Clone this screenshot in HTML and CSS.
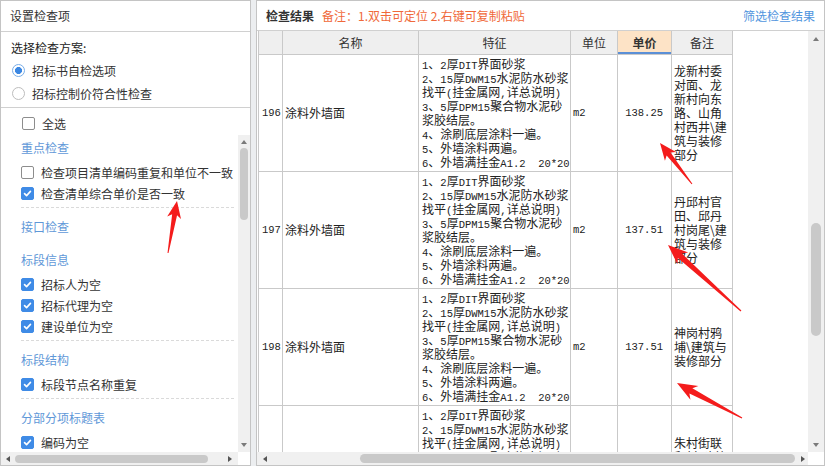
FILE: index.html
```html
<!DOCTYPE html>
<html lang="zh-CN">
<head>
<meta charset="utf-8">
<title>设置检查项</title>
<link rel="stylesheet" href="styles.css">
</head>
<body>
<div class="app">
  <aside class="left">
    <div class="ptitle">设置检查项</div>
    <div class="scheme">
      <div class="scheme-title">选择检查方案:</div>
      <div class="radio on"><span class="rb"></span>招标书自检选项</div>
      <div class="radio"><span class="rb"></span>招标控制价符合性检查</div>
    </div>
    <div class="selall"><span class="cb"></span>全选</div>
    <div class="lscroll">
      <div class="lview">
        <div class="list">
          <div class="glabel">重点检查</div>
          <div class="items">
            <div class="item"><span class="cb"></span>检查项目清单编码重复和单位不一致</div>
            <div class="item"><span class="cb on"><svg viewBox="0 0 13 13"><path d="M3 6.6l2.4 2.4 4.6-5"/></svg></span>检查清单综合单价是否一致</div>
          </div>
          <div class="sep"></div>
          <div class="glabel">接口检查</div>
          <div class="empty"></div>
          <div class="glabel">标段信息</div>
          <div class="items">
            <div class="item"><span class="cb on"><svg viewBox="0 0 13 13"><path d="M3 6.6l2.4 2.4 4.6-5"/></svg></span>招标人为空</div>
            <div class="item"><span class="cb on"><svg viewBox="0 0 13 13"><path d="M3 6.6l2.4 2.4 4.6-5"/></svg></span>招标代理为空</div>
            <div class="item"><span class="cb on"><svg viewBox="0 0 13 13"><path d="M3 6.6l2.4 2.4 4.6-5"/></svg></span>建设单位为空</div>
          </div>
          <div class="sep"></div>
          <div class="glabel">标段结构</div>
          <div class="items">
            <div class="item"><span class="cb on"><svg viewBox="0 0 13 13"><path d="M3 6.6l2.4 2.4 4.6-5"/></svg></span>标段节点名称重复</div>
          </div>
          <div class="sep"></div>
          <div class="glabel">分部分项标题表</div>
          <div class="items">
            <div class="item"><span class="cb on"><svg viewBox="0 0 13 13"><path d="M3 6.6l2.4 2.4 4.6-5"/></svg></span>编码为空</div>
          </div>
        </div>
      </div>
      <div class="vbar lv">
        <span class="tri-up"></span>
        <span class="vthumb"></span>
        <span class="spacer"></span>
        <span class="tri-down"></span>
      </div>
      <div class="hbar lh">
        <span class="tri-left"></span>
        <span class="hthumb"></span>
        <span class="spacer"></span>
        <span class="tri-right"></span>
      </div>
      <div class="corner"></div>
    </div>
  </aside>

  <main class="right">
    <div class="rhead">
      <span class="rtitle">检查结果</span>
      <span class="rnote">备注：1.双击可定位 2.右键可复制粘贴</span>
      <a class="rlink">筛选检查结果</a>
    </div>
    <div class="rbody">
      <div class="gview">
        <table class="grid">
          <colgroup>
            <col class="c-no"><col class="c-name"><col class="c-feat"><col class="c-unit"><col class="c-price"><col class="c-note">
          </colgroup>
          <thead>
            <tr>
              <th></th><th>名称</th><th>特征</th><th>单位</th><th class="sorted">单价</th><th>备注</th>
            </tr>
          </thead>
          <tbody>
            <tr>
              <td class="no">196</td>
              <td class="name">涂料外墙面</td>
              <td class="feat"><span class="l">1</span>、<span class="l">2</span>厚<span class="l">DIT</span>界面砂浆<br><span class="l">2</span>、<span class="l">15</span>厚<span class="l">DWM15</span>水泥防水砂浆<br>找平<span class="l">(</span>挂金属网<span class="l">,</span>详总说明<span class="l">)</span><br><span class="l">3</span>、<span class="l">5</span>厚<span class="l">DPM15</span>聚合物水泥砂<br>浆胶结层。<br><span class="l">4</span>、涂刷底层涂料一遍。<br><span class="l">5</span>、外墙涂料两遍。<br><span class="l">6</span>、外墙满挂金<span class="l">A1.2&nbsp;&nbsp;20*20</span></td>
              <td class="unit">m2</td>
              <td class="price">138.25</td>
              <td class="note">龙新村委<br>对面、龙<br>新村向东<br>路、山角<br>村西井\建<br>筑与装修<br>部分</td>
            </tr>
            <tr>
              <td class="no">197</td>
              <td class="name">涂料外墙面</td>
              <td class="feat"><span class="l">1</span>、<span class="l">2</span>厚<span class="l">DIT</span>界面砂浆<br><span class="l">2</span>、<span class="l">15</span>厚<span class="l">DWM15</span>水泥防水砂浆<br>找平<span class="l">(</span>挂金属网<span class="l">,</span>详总说明<span class="l">)</span><br><span class="l">3</span>、<span class="l">5</span>厚<span class="l">DPM15</span>聚合物水泥砂<br>浆胶结层。<br><span class="l">4</span>、涂刷底层涂料一遍。<br><span class="l">5</span>、外墙涂料两遍。<br><span class="l">6</span>、外墙满挂金<span class="l">A1.2&nbsp;&nbsp;20*20</span></td>
              <td class="unit">m2</td>
              <td class="price">137.51</td>
              <td class="note">丹邱村官<br>田、邱丹<br>村岗尾\建<br>筑与装修<br>部分</td>
            </tr>
            <tr>
              <td class="no">198</td>
              <td class="name">涂料外墙面</td>
              <td class="feat"><span class="l">1</span>、<span class="l">2</span>厚<span class="l">DIT</span>界面砂浆<br><span class="l">2</span>、<span class="l">15</span>厚<span class="l">DWM15</span>水泥防水砂浆<br>找平<span class="l">(</span>挂金属网<span class="l">,</span>详总说明<span class="l">)</span><br><span class="l">3</span>、<span class="l">5</span>厚<span class="l">DPM15</span>聚合物水泥砂<br>浆胶结层。<br><span class="l">4</span>、涂刷底层涂料一遍。<br><span class="l">5</span>、外墙涂料两遍。<br><span class="l">6</span>、外墙满挂金<span class="l">A1.2&nbsp;&nbsp;20*20</span></td>
              <td class="unit">m2</td>
              <td class="price">137.51</td>
              <td class="note">神岗村鸦<br>埔\建筑与<br>装修部分</td>
            </tr>
            <tr>
              <td class="no">199</td>
              <td class="name">涂料外墙面</td>
              <td class="feat"><span class="l">1</span>、<span class="l">2</span>厚<span class="l">DIT</span>界面砂浆<br><span class="l">2</span>、<span class="l">15</span>厚<span class="l">DWM15</span>水泥防水砂浆<br>找平<span class="l">(</span>挂金属网<span class="l">,</span>详总说明<span class="l">)</span><br><span class="l">3</span>、<span class="l">5</span>厚<span class="l">DPM15</span>聚合物水泥砂<br>浆胶结层。<br><span class="l">4</span>、涂刷底层涂料一遍。<br><span class="l">5</span>、外墙涂料两遍。<br><span class="l">6</span>、外墙满挂金<span class="l">A1.2&nbsp;&nbsp;20*20</span></td>
              <td class="unit">m2</td>
              <td class="price">137.51</td>
              <td class="note">朱村街联<br>和村\建筑<br>与装修部<br>分</td>
            </tr>
          </tbody>
        </table>
      </div>
      <div class="vbar rv">
        <span class="tri-up"></span>
        <span class="vthumb"></span>
        <span class="spacer"></span>
        <span class="tri-down"></span>
      </div>
      <div class="hbar rh">
        <span class="tri-left"></span>
        <span class="hthumb"></span>
        <span class="spacer"></span>
        <span class="tri-right"></span>
      </div>
      <div class="corner"></div>
    </div>
  </main>

  <svg class="marks" viewBox="0 0 825 466" width="825" height="466">
    <polygon points="168.49,253.09 177.07,215.22 181.0,218.94 177,201 167.2,216.56 172.15,214.36 167.51,252.91"/>
    <polygon points="692.39,183.69 670.58,152.49 675.98,152.09 660,143 664.94,160.71 666.64,155.57 691.61,184.31"/>
    <polygon points="741.40,310.55 681.88,253.50 688.21,252.48 668,245 677.47,264.34 677.86,257.96 740.60,311.45"/>
    <polygon points="742.30,417.48 692.38,388.30 698.34,385.94 677,383 690.42,399.84 689.42,393.52 741.70,418.52"/>
  </svg>
</div>
</body>
</html>
```

FILE: styles.css
```css
html, body {
  margin: 0;
  padding: 0;
}
body {
  background: #eceef0;
  font-family: "Noto Sans CJK SC", "Microsoft YaHei", sans-serif;
  font-size: 12px;
  color: #333;
}
.app {
  position: relative;
  display: flex;
  gap: 5px;
  width: 825px;
  height: 466px;
  overflow: hidden;
}

/* ---------- left panel ---------- */
.left {
  width: 251px;
  flex: none;
  box-sizing: border-box;
  border: 1px solid #c4c4c4;
  background: #fff;
  display: flex;
  flex-direction: column;
}
.ptitle {
  height: 30px;
  line-height: 30px;
  padding-left: 9px;
  border-bottom: 1px solid #d0d0d0;
  color: #333;
}
.scheme {
  padding: 7px 0 2px;
  border-bottom: 1px solid #d0d0d0;
}
.scheme-title {
  line-height: 18px;
  padding-left: 10px;
  margin-bottom: 2px;
  color: #222;
}
.radio {
  display: flex;
  align-items: center;
  height: 23px;
  padding-left: 11px;
  gap: 7px;
  color: #333;
}
.rb {
  width: 13px;
  height: 13px;
  box-sizing: border-box;
  border-radius: 50%;
  border: 1px solid #bdbdbd;
  background: #fff;
  flex: none;
}
.radio.on .rb {
  border-color: #79aee8;
  background: radial-gradient(circle, #3b87e2 0 3.2px, #fff 3.8px);
}
.selall {
  height: 27px;
  box-sizing: border-box;
  padding: 3px 0 0 21px;
  display: flex;
  align-items: center;
  gap: 7px;
}
.cb {
  width: 13px;
  height: 13px;
  box-sizing: border-box;
  border: 1px solid #8d8d8d;
  border-radius: 2px;
  background: #fff;
  flex: none;
  display: inline-flex;
}
.cb.on {
  background: #3f8be6;
  border-color: #3f8be6;
}
.cb svg {
  width: 11px;
  height: 11px;
  fill: none;
  stroke: #fff;
  stroke-width: 1.9;
  stroke-linecap: round;
  stroke-linejoin: round;
}
.lscroll {
  flex: 1;
  min-height: 0;
  display: grid;
  grid-template-columns: minmax(0, 1fr) 12px;
  grid-template-rows: minmax(0, 1fr) 13px;
}
.lview {
  overflow: hidden;
  min-height: 0;
}
.list {
  padding: 0 4px 0 20px;
}
.glabel {
  height: 22px;
  line-height: 22px;
  margin-top: 2px;
  color: #5f98d8;
}
.items {
  margin-top: 3px;
}
.item {
  height: 21px;
  display: flex;
  align-items: center;
  gap: 7px;
  white-space: nowrap;
  color: #333;
}
.sep {
  border-top: 1px dashed #dadada;
  margin: 3px 0 8px;
}
.empty {
  height: 9px;
}

/* ---------- scrollbars ---------- */
.vbar {
  background: #f0f0f0;
  display: flex;
  flex-direction: column;
  align-items: center;
  min-height: 0;
}
.hbar {
  background: #f0f0f0;
  display: flex;
  align-items: center;
}
.spacer {
  flex: 1;
}
.corner {
  background: #fff;
}
.tri-up, .tri-down, .tri-left, .tri-right {
  width: 0;
  height: 0;
  flex: none;
}
.tri-up {
  border-left: 3.5px solid transparent;
  border-right: 3.5px solid transparent;
  border-bottom: 4px solid #7a7a7a;
}
.tri-down {
  border-left: 3.5px solid transparent;
  border-right: 3.5px solid transparent;
  border-top: 4px solid #7a7a7a;
}
.tri-left {
  border-top: 3.5px solid transparent;
  border-bottom: 3.5px solid transparent;
  border-right: 4px solid #555;
}
.tri-right {
  border-top: 3.5px solid transparent;
  border-bottom: 3.5px solid transparent;
  border-left: 4px solid #555;
}
.vthumb {
  flex: none;
  background: #c9c9c9;
  border-radius: 5px;
}
.hthumb {
  flex: none;
  background: #c9c9c9;
  border-radius: 5px;
}
.lv {
  padding: 5px 0 5px;
}
.lv .vthumb {
  width: 8px;
  height: 72px;
  margin-top: 4px;
}
.lh {
  padding: 0 6px 0 5px;
}
.lh .hthumb {
  width: 193px;
  height: 8px;
  margin-left: 5px;
}

/* ---------- right panel ---------- */
.right {
  flex: 1;
  min-width: 0;
  box-sizing: border-box;
  border: 1px solid #c4c4c4;
  background: #fff;
  display: flex;
  flex-direction: column;
}
.rhead {
  height: 29px;
  display: flex;
  align-items: center;
  padding: 0 9px 0 9px;
  border-bottom: 1px solid #d0d0d0;
}
.rtitle {
  font-weight: bold;
  color: #333;
}
.rnote {
  margin-left: 8px;
  color: #f0693a;
}
.rlink {
  margin-left: auto;
  color: #4f95de;
}
.rbody {
  flex: 1;
  min-height: 0;
  display: grid;
  grid-template-columns: minmax(0, 1fr) 16px;
  grid-template-rows: minmax(0, 1fr) 13px;
}
.gview {
  overflow: hidden;
  min-height: 0;
  padding-left: 1px;
}
.grid {
  border-collapse: collapse;
  table-layout: fixed;
  width: 475px;
}
.c-no { width: 24px; }
.c-name { width: 136px; }
.c-feat { width: 152px; }
.c-unit { width: 47px; }
.c-price { width: 54px; }
.c-note { width: 61px; }
.grid th, .grid td {
  border: 1px solid #c9c9c9;
  padding: 0;
}
.grid th {
  border-top: 0;
  height: 23px;
  background: #efefef;
  font-weight: normal;
  color: #333;
  text-align: center;
}
.grid th.sorted {
  background: #fde3c6;
  font-weight: bold;
  box-shadow: inset 0 -2px 0 #5b8fd6;
}
.grid tbody tr {
  height: 117px;
}
.grid td {
  vertical-align: middle;
  white-space: nowrap;
  overflow: hidden;
  color: #222;
  line-height: 14px;
}
.l, .no, .unit, .price {
  font-family: "Liberation Mono", monospace;
  font-size: 10.5px;
}
.feat .l {
  line-height: 8px;
}
.no {
  padding-left: 3px !important;
}
.name {
  padding-left: 2px !important;
}
.feat {
  padding-left: 3px !important;
  line-height: 14px;
}
.unit {
  padding-left: 2px !important;
}
.price {
  text-align: right;
  padding-right: 8px !important;
}
.note {
  padding-left: 2px !important;
  line-height: 14px;
}
.rv {
  padding: 6px 0 5px;
}
.rv .vthumb {
  width: 10px;
  height: 113px;
  margin-top: 182px;
}
.rh {
  padding: 0 3px 0 6px;
}
.rh .hthumb {
  width: 435px;
  height: 9px;
  margin-left: 93px;
}

/* ---------- annotation arrows ---------- */
.marks {
  position: absolute;
  left: 0;
  top: 0;
  pointer-events: none;
}
.marks polygon {
  fill: #f41c1c;
}
```
